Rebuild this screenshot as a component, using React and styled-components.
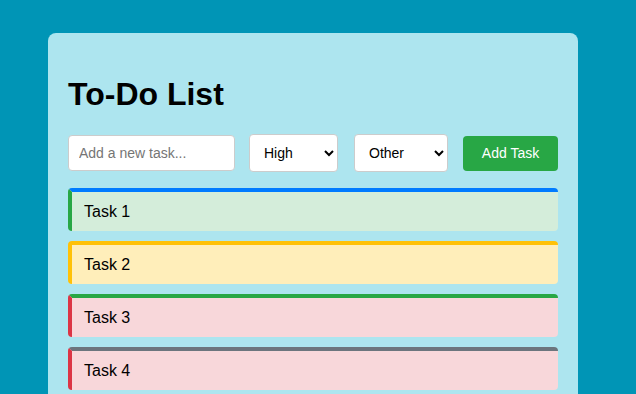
import React from 'react';
import styled, { createGlobalStyle } from 'styled-components';

const GlobalStyle = createGlobalStyle`
  * { box-sizing: border-box; }
  body {
    margin: 0;
    background: #0095b6;
    font-family: "Liberation Sans", Arial, sans-serif;
  }
`;

const Page = styled.div`
  padding: 33px 0 0 48px;
  min-height: 394px;
`;

const Card = styled.div`
  width: 530px;
  background: #ade5ef;
  border-radius: 8px;
  padding: 20px;
`;

const Title = styled.h1`
  font-size: 32px;
  line-height: 37px;
  margin: 23px 0 21px;
  color: #000;
`;

const Form = styled.div`
  display: flex;
  align-items: center;
  margin-bottom: 16px;
`;

const Input = styled.input`
  width: 167px;
  height: 36px;
  padding: 0 10px;
  border: 1px solid #ccc;
  border-radius: 4px;
  font-family: inherit;
  font-size: 14px;
  margin-right: 14px;
  &::placeholder { color: #757575; }
`;

const Select = styled.select`
  width: ${(p) => p.$w}px;
  height: 38px;
  padding: 0 10px;
  border: 1px solid #ccc;
  border-radius: 4px;
  background: #fff;
  font-family: inherit;
  font-size: 14px;
  color: #000;
  margin-right: ${(p) => p.$mr}px;
`;

const Button = styled.button`
  width: 95px;
  height: 35px;
  border: none;
  border-radius: 4px;
  background: #28a745;
  color: #fff;
  font-family: inherit;
  font-size: 14px;
`;

const List = styled.ul`
  list-style: none;
  margin: 0;
  padding: 0;
`;

const Item = styled.li`
  background: ${(p) => p.$bg};
  border-top: 4px solid ${(p) => p.$top};
  border-left: 4px solid ${(p) => p.$left};
  border-radius: 4px;
  padding: 10px 12px;
  font-size: 16px;
  line-height: 19px;
  color: #000;
  margin-bottom: 10px;
`;

const tasks = [
  { text: 'Task 1', top: '#007bff', left: '#28a745', bg: '#d4edda' },
  { text: 'Task 2', top: '#ffc107', left: '#ffc107', bg: '#ffeeba' },
  { text: 'Task 3', top: '#28a745', left: '#dc3545', bg: '#f8d7da' },
  { text: 'Task 4', top: '#6c757d', left: '#dc3545', bg: '#f8d7da' },
];

export default function App() {
  return (
    <Page>
      <GlobalStyle />
      <Card>
        <Title>To-Do List</Title>
        <Form>
          <Input placeholder="Add a new task..." />
          <Select $w={89} $mr={16} defaultValue="High">
            <option>High</option>
            <option>Medium</option>
            <option>Low</option>
          </Select>
          <Select $w={94} $mr={15} defaultValue="Other">
            <option>Work</option>
            <option>Personal</option>
            <option>Other</option>
          </Select>
          <Button>Add Task</Button>
        </Form>
        <List>
          {tasks.map((t) => (
            <Item key={t.text} $top={t.top} $left={t.left} $bg={t.bg}>
              {t.text}
            </Item>
          ))}
        </List>
      </Card>
    </Page>
  );
}
